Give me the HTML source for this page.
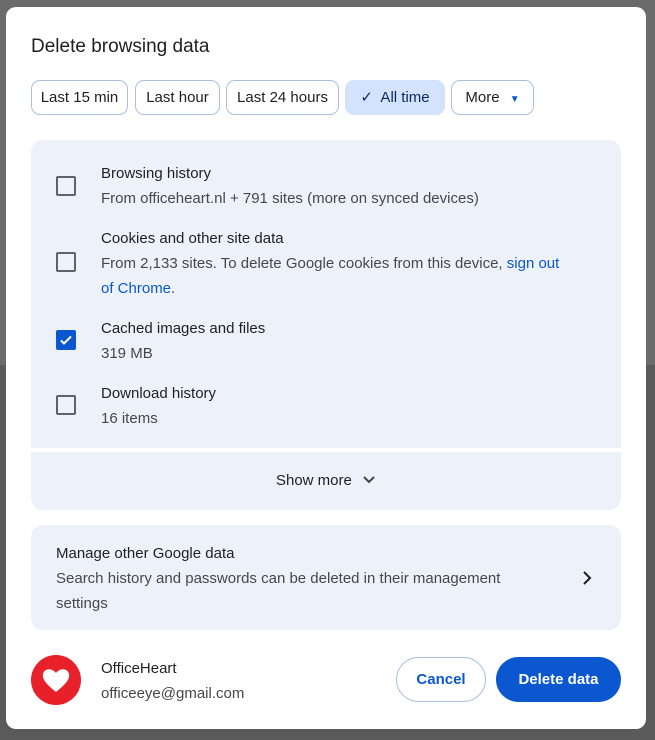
<!DOCTYPE html>
<html><head><style>
*{margin:0;padding:0;box-sizing:border-box}
body{width:655px;height:740px;background:#5a5a5a;font-family:"Liberation Sans",Arial,sans-serif;position:relative;overflow:hidden}
.bg1{position:absolute;left:0;top:0;width:655px;height:365px;background:#6b6b6b}
.dlg{position:absolute;left:6px;top:7px;width:640px;height:722px;background:#fff;border-radius:10px}
.t{position:absolute;left:25px;top:29px;font-size:19px;color:#1f1f1f}
.chip{position:absolute;top:73px;height:35px;border:1px solid #a8c0e0;border-radius:9px;font-size:15px;color:#1f1f1f;line-height:33px;padding:0;text-align:center;white-space:nowrap}
.sel{background:#d3e3fd;border-color:#d3e3fd;color:#0b2a5c}
.p1{position:absolute;left:25px;top:133px;width:590px;height:308px;background:#edf2fa;border-radius:12px 12px 0 0}
.p1b{position:absolute;left:25px;top:445px;width:590px;height:58px;background:#edf2fa;border-radius:0 0 12px 12px;text-align:center;font-size:15px;color:#1f1f1f;line-height:58px}
.cb{position:absolute;left:25px;width:20px;height:20px;border:2px solid #5f6368;border-radius:2px}
.cbc{background:#0b57d0;border-color:#0b57d0}
.h{position:absolute;left:70px;font-size:15px;color:#1f1f1f}
.s{position:absolute;left:70px;font-size:15px;color:#474747;line-height:25px;white-space:nowrap}
a{color:#0b57d0}
.p2{position:absolute;left:25px;top:518px;width:590px;height:105px;background:#edf2fa;border-radius:12px}
.btn{position:absolute;top:650px;height:45px;border-radius:23px;font-size:15px;font-weight:bold;line-height:43px;text-align:center}
</style></head><body>
<div class="bg1"></div>
<div class="dlg">
<div class="t">Delete browsing data</div>
<div class="chip" style="left:25px;width:97px">Last 15 min</div>
<div class="chip" style="left:129px;width:85px">Last hour</div>
<div class="chip" style="left:220px;width:113px">Last 24 hours</div>
<div class="chip sel" style="left:339px;width:100px">✓&nbsp; All time</div>
<div class="chip" style="left:445px;width:83px">More <span style="color:#0b57d0;font-size:10px;margin-left:6px">▼</span></div>
<div class="p1">
<div class="cb" style="top:36px"></div>
<div class="h" style="top:25px">Browsing history</div>
<div class="s" style="top:46px">From officeheart.nl + 791 sites (more on synced devices)</div>
<div class="cb" style="top:112px"></div>
<div class="h" style="top:90px">Cookies and other site data</div>
<div class="s" style="top:111px">From 2,133 sites. To delete Google cookies from this device, <a>sign out</a><br><a>of Chrome</a>.</div>
<div class="cb cbc" style="top:190px"><svg width="16" height="16" viewBox="0 0 16 16" style="position:absolute;left:0;top:0"><path d="M3 8.5l3 3 7-7" stroke="#fff" stroke-width="2" fill="none"/></svg></div>
<div class="h" style="top:180px">Cached images and files</div>
<div class="s" style="top:201px">319 MB</div>
<div class="cb" style="top:255px"></div>
<div class="h" style="top:245px">Download history</div>
<div class="s" style="top:266px">16 items</div>
</div>
<div class="p1b">Show more <svg width="14" height="10" viewBox="0 0 14 10" style="margin-left:6px"><path d="M2 2l5 5 5-5" stroke="#444" stroke-width="2" fill="none"/></svg></div>
<div class="p2">
<div style="position:absolute;left:25px;top:20px;font-size:15px;color:#1f1f1f">Manage other Google data</div>
<div style="position:absolute;left:25px;top:41px;font-size:15px;color:#474747;line-height:25px;width:500px">Search history and passwords can be deleted in their management settings</div>
<svg width="12" height="14" viewBox="0 0 12 14" style="position:absolute;left:550px;top:46px"><path d="M3 1l6 6-6 6" stroke="#1f1f1f" stroke-width="2" fill="none"/></svg>
</div>
<div style="position:absolute;left:25px;top:648px;width:50px;height:50px;border-radius:50%;background:#e8202a"><svg width="50" height="50" viewBox="0 0 50 50"><path d="M25 37C15 29 11 24 12 19c1-5 8-7 13-1 5-6 12-4 13 1 1 5-3 10-13 18z" fill="#fff"/></svg></div>
<div style="position:absolute;left:95px;top:653px;font-size:15px;color:#1f1f1f">OfficeHeart</div>
<div style="position:absolute;left:95px;top:678px;font-size:15px;color:#474747">officeeye@gmail.com</div>
<div class="btn" style="left:390px;width:90px;border:1px solid #a8c0e0;color:#0b57d0">Cancel</div>
<div class="btn" style="left:490px;width:125px;background:#0b57d0;color:#fff;line-height:45px">Delete data</div>
</div>
</body></html>
